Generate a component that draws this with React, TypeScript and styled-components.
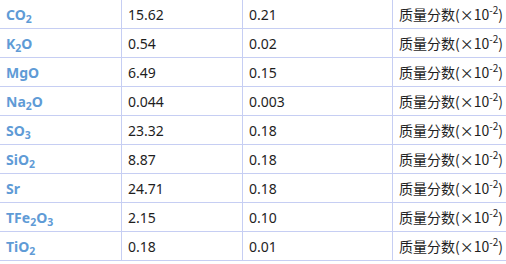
import React from "react";
import styled, { createGlobalStyle } from "styled-components";

const Global = createGlobalStyle`
  html, body { margin: 0; padding: 0; background: #fff; overflow: hidden; }
  body { font-family: "Noto Sans", "Noto Sans CJK SC", sans-serif; }
`;

const Frame = styled.div`
  width: 506px;
  height: 264px;
  overflow: hidden;
`;

const Table = styled.table`
  border-collapse: collapse;
  margin: -1px 0 0 -1px;
  table-layout: fixed;
  width: 510px;
`;

const Row = styled.tr`
  height: 29px;
`;

const Cell = styled.td<{ $w: number }>`
  width: ${(p) => p.$w}px;
  border: 1px solid #c6cef3;
  padding: 0 6px;
  height: 28px;
  box-sizing: border-box;
  font-size: 14px;
  color: #1e1e1e;
  white-space: nowrap;
  vertical-align: middle;
`;

const Label = styled.span`
  font-weight: bold;
  color: #5f9bd6;
  font-size: 14px;
`;

const Sub = styled.sub`
  font-size: 10.5px;
  vertical-align: -3px;
  line-height: 0;
`;

const Unit = styled.span`
  font-family: "Noto Sans CJK SC", "Noto Sans", sans-serif;
  font-size: 14px;
  color: #1e1e1e;
`;

const Sup = styled.sup`
  font-size: 10px;
  vertical-align: 6px;
  line-height: 0;
`;

type Part = { t: string; sub?: boolean };
const rows: { label: Part[]; a: string; b: string }[] = [
  { label: [{ t: "CO" }, { t: "2", sub: true }], a: "15.62", b: "0.21" },
  { label: [{ t: "K" }, { t: "2", sub: true }, { t: "O" }], a: "0.54", b: "0.02" },
  { label: [{ t: "MgO" }], a: "6.49", b: "0.15" },
  { label: [{ t: "Na" }, { t: "2", sub: true }, { t: "O" }], a: "0.044", b: "0.003" },
  { label: [{ t: "SO" }, { t: "3", sub: true }], a: "23.32", b: "0.18" },
  { label: [{ t: "SiO" }, { t: "2", sub: true }], a: "8.87", b: "0.18" },
  { label: [{ t: "Sr" }], a: "24.71", b: "0.18" },
  {
    label: [{ t: "TFe" }, { t: "2", sub: true }, { t: "O" }, { t: "3", sub: true }],
    a: "2.15",
    b: "0.10",
  },
  { label: [{ t: "TiO" }, { t: "2", sub: true }], a: "0.18", b: "0.01" },
];

export default function App() {
  return (
    <>
      <Global />
      <Frame>
        <Table>
          <tbody>
            {rows.map((r, i) => (
              <Row key={i}>
                <Cell $w={122}>
                  <Label>
                    {r.label.map((p, j) =>
                      p.sub ? <Sub key={j}>{p.t}</Sub> : <React.Fragment key={j}>{p.t}</React.Fragment>
                    )}
                  </Label>
                </Cell>
                <Cell $w={121}>{r.a}</Cell>
                <Cell $w={150}>{r.b}</Cell>
                <Cell $w={117}>
                  <Unit>
                    质量分数(×10<Sup>-2</Sup>)
                  </Unit>
                </Cell>
              </Row>
            ))}
          </tbody>
        </Table>
      </Frame>
    </>
  );
}
